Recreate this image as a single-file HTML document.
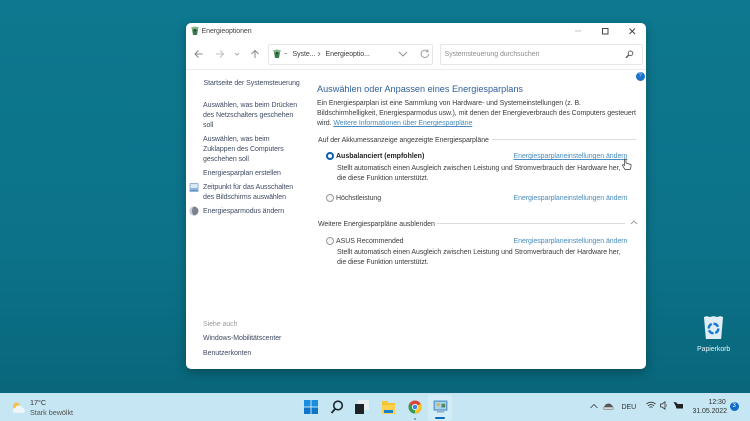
<!DOCTYPE html>
<html lang="de"><head><meta charset="utf-8"><title>Energieoptionen</title>
<style>
html,body{margin:0;padding:0;width:750px;height:421px;overflow:hidden}
body{position:relative;background:linear-gradient(180deg,#0d788f 0%,#0c7289 60%,#086478 100%);font-family:"Liberation Sans",sans-serif;color:#333}
.t{position:absolute;white-space:nowrap;font-size:7px;letter-spacing:-.06px;line-height:10px;color:#3c3c3c;margin-top:1px}
.n{color:#3f4a62}
.l{color:#4a8cbf}
.u{text-decoration:underline}
#win{position:absolute;left:186px;top:23px;width:460px;height:346px;background:#fff;border-radius:5px;box-shadow:0 3px 10px rgba(0,0,0,.3)}
.box{position:absolute;background:#fff;border:1px solid #e6e6e6;border-radius:2px;box-sizing:border-box}
.hr{position:absolute;height:1px;background:#dcdcdc}
.rb{position:absolute;width:8px;height:8px;border-radius:50%;border:1px solid #9a9a9a;background:#f6f6f6;box-sizing:border-box}
svg{position:absolute;overflow:visible}
#bar{position:absolute;left:0;top:393px;width:750px;height:28px;background:#c5e6f2}
</style></head><body>

<div id="win"></div>

<!-- title bar -->
<svg style="left:190px;top:26px" width="10" height="10" viewBox="0 0 10 10"><path d="M2 3h6l-1 6H3z" fill="#3b7d4a"/><path d="M1 1.500L5 .5l4 1-1 2H2z" fill="#7fb58a"/><path d="M4 3l2 0-1 4z" fill="#23402b"/></svg>
<div class="t" style="left:201.500px;top:25px;color:#444;margin-top:1px;top:26px">Energieoptionen</div>
<svg style="left:600px;top:27px" width="40" height="10" viewBox="0 0 40 10" fill="none"><path d="M-25 4h6" stroke="#c4c4c4" stroke-width="1"/><rect x="2.500" y="1.500" width="5.500" height="5.500" stroke="#444" stroke-width="1"/><path d="M29.500 1.500l5.500 5.500M35 1.500l-5.500 5.500" stroke="#444" stroke-width="1"/></svg>

<!-- nav bar -->
<svg style="left:194px;top:49px" width="70" height="10" viewBox="0 0 70 10" fill="none" stroke-width="1"><path d="M8.500 5H1M4.500 1.500L1 5l3.500 3.500" stroke="#8a8a8a"/><path d="M22 5h7.500M26 1.500L29.500 5 26 8.500" stroke="#c0c0c0"/><path d="M41 4l2 2 2-2" stroke="#b0b0b0"/><path d="M61 9V1.500M57.500 5L61 1.500 64.500 5" stroke="#8a8a8a"/></svg>
<div class="box" style="left:267.500px;top:44px;width:165.500px;height:21px"></div>
<svg style="left:272px;top:49px" width="10" height="10" viewBox="0 0 10 10"><path d="M2 3h6l-1 6H3z" fill="#3b7d4a"/><path d="M1 1.500L5 .5l4 1-1 2H2z" fill="#7fb58a"/><path d="M4 3l2 0-1 4z" fill="#23402b"/></svg>
<svg style="left:284px;top:52px" width="4" height="4"><path d="M.5 1.500h2.500" stroke="#888" stroke-width=".8"/></svg>
<div class="t" style="left:292.500px;top:49px">Syste...</div>
<svg style="left:317px;top:51px" width="5" height="6" fill="none"><path d="M1 1l2 2-2 2" stroke="#777" stroke-width=".8"/></svg>
<div class="t" style="left:325.500px;top:49px">Energieoptio...</div>
<svg style="left:398px;top:51px" width="10" height="6" fill="none"><path d="M1 1l4 4 4-4" stroke="#888" stroke-width=".9"/></svg>
<svg style="left:420px;top:49px" width="10" height="10" viewBox="0 0 10 10" fill="none"><path d="M8.500 5A3.700 3.700 0 1 1 7.500 2.300M8 .5v2.300H5.700" stroke="#9a9a9a" stroke-width=".9"/></svg>
<div class="box" style="left:440px;top:44px;width:203px;height:21px"></div>
<div class="t" style="left:444.500px;top:49px;color:#8d8d8d">Systemsteuerung durchsuchen</div>
<svg style="left:625px;top:50px" width="9" height="9" viewBox="0 0 9 9" fill="none"><circle cx="5.500" cy="3.300" r="2.300" stroke="#666" stroke-width="1"/><path d="M3.800 5L1 7.800" stroke="#555" stroke-width="1.400"/></svg>
<div class="hr" style="left:186px;top:69px;width:460px;background:#ececec"></div>

<!-- help -->
<div style="position:absolute;left:635.500px;top:71.500px;width:9px;height:9px;border-radius:50%;background:#1a73c8"></div>
<div class="t" style="left:638.500px;top:70.500px;color:#cfe3f5;font-size:6px;line-height:9px">?</div>

<!-- left pane -->
<div class="t n" style="left:203.500px;top:78px">Startseite der Systemsteuerung</div>
<div class="t n" style="left:203px;top:99.500px">Auswählen, was beim Drücken</div>
<div class="t n" style="left:203px;top:109.500px">des Netzschalters geschehen</div>
<div class="t n" style="left:203px;top:119.500px">soll</div>
<div class="t n" style="left:203px;top:133.500px">Auswählen, was beim</div>
<div class="t n" style="left:203px;top:143.500px">Zuklappen des Computers</div>
<div class="t n" style="left:203px;top:153.500px">geschehen soll</div>
<div class="t n" style="left:203px;top:167.700px">Energiesparplan erstellen</div>
<svg style="left:189px;top:182px" width="10" height="10" viewBox="0 0 10 10"><rect x=".5" y="1" width="9" height="7.500" rx="1" fill="#8fb4d8"/><rect x="1.500" y="2" width="7" height="4" fill="#dbe9f5"/><path d="M.5 8.500h9v1h-9z" fill="#2f6fb0"/></svg>
<div class="t n" style="left:203px;top:182px">Zeitpunkt für das Ausschalten</div>
<div class="t n" style="left:203px;top:191.700px">des Bildschirms auswählen</div>
<svg style="left:189px;top:206px" width="10" height="10" viewBox="0 0 10 10"><circle cx="5" cy="5" r="4.500" fill="#7c8290"/><path d="M5 .5a4.500 4.500 0 0 0 0 9 6 6 0 0 1 0-9z" fill="#c8ced8"/></svg>
<div class="t n" style="left:203px;top:206.300px">Energiesparmodus ändern</div>
<div class="t" style="left:203px;top:319px;color:#9a9a9a">Siehe auch</div>
<div class="t n" style="left:203px;top:333px">Windows-Mobilitätscenter</div>
<div class="t n" style="left:203px;top:348px">Benutzerkonten</div>

<!-- right pane -->
<div class="t" style="left:317px;top:81.500px;font-size:9.150px;letter-spacing:0;line-height:12px;color:#2f5f9a">Auswählen oder Anpassen eines Energiesparplans</div>
<div class="t" style="left:317px;top:98.300px">Ein Energiesparplan ist eine Sammlung von Hardware- und Systemeinstellungen (z. B.</div>
<div class="t" style="left:317px;top:108.300px">Bildschirmhelligkeit, Energiesparmodus usw.), mit denen der Energieverbrauch des Computers gesteuert</div>
<div class="t" style="left:317px;top:118px">wird. <span class="l u">Weitere Informationen über Energiesparpläne</span></div>

<div class="t" style="left:318px;top:135.300px">Auf der Akkumessanzeige angezeigte Energiesparpläne</div>
<div class="hr" style="left:492px;top:139px;width:144px"></div>

<div style="position:absolute;left:326px;top:152px;width:8px;height:8px;border-radius:50%;border:2.500px solid #0a5fb4;background:#fff;box-sizing:border-box"></div>
<div class="t" style="left:336px;top:151px;font-weight:bold;letter-spacing:0;color:#222">Ausbalanciert (empfohlen)</div>
<div class="t l u" style="left:513.500px;top:151px">Energiesparplaneinstellungen ändern</div>
<div class="t" style="left:337px;top:163px">Stellt automatisch einen Ausgleich zwischen Leistung und Stromverbrauch der Hardware her,</div>
<div class="t" style="left:337px;top:172.700px">die diese Funktion unterstützt.</div>
<svg style="left:622px;top:158px" width="10" height="13" viewBox="0 0 10 13"><path d="M2.500 1v6.500L1 6.500.5 7.500 3 11.500h5l1-2.500V6.500L5.500 5.500 4 5V1z" fill="#fff" stroke="#333" stroke-width=".7"/></svg>

<div class="rb" style="left:326px;top:194px"></div>
<div class="t" style="left:336px;top:193px">Höchstleistung</div>
<div class="t l" style="left:513.500px;top:193px">Energiesparplaneinstellungen ändern</div>

<div class="t" style="left:318px;top:218.700px">Weitere Energiesparpläne ausblenden</div>
<div class="hr" style="left:437px;top:223px;width:188px"></div>
<svg style="left:630px;top:220px" width="8" height="5" fill="none"><path d="M1 4l3-3 3 3" stroke="#999" stroke-width=".9"/></svg>

<div class="rb" style="left:326px;top:237px"></div>
<div class="t" style="left:336px;top:235.700px">ASUS Recommended</div>
<div class="t l" style="left:513.500px;top:235.700px">Energiesparplaneinstellungen ändern</div>
<div class="t" style="left:337px;top:247.300px">Stellt automatisch einen Ausgleich zwischen Leistung und Stromverbrauch der Hardware her,</div>
<div class="t" style="left:337px;top:257px">die diese Funktion unterstützt.</div>

<!-- recycle bin -->
<svg style="left:703px;top:315px" width="21" height="26" viewBox="0 0 22 27"><path d="M1 2l3-1 3 1 4-1 4 1 3-1 3 1-2 23H3z" fill="#dfeef4"/><circle cx="11" cy="14" r="5" fill="none" stroke="#1a78d0" stroke-width="2.600" stroke-dasharray="6 1.800"/></svg>
<div class="t" style="left:697px;top:343.500px;color:#e8f2f5">Papierkorb</div>

<!-- taskbar -->
<div id="bar"></div>
<svg style="left:11px;top:401px" width="15" height="13" viewBox="0 0 15 13"><circle cx="5.500" cy="5" r="3.500" fill="#f2c14e"/><path d="M4 12a2.500 2.500 0 0 1 .3-5 3.500 3.500 0 0 1 6.500-.5 2.800 2.800 0 0 1 1 5.500z" fill="#eef4f7"/></svg>
<div class="t" style="left:30px;top:397px;color:#333;font-size:7.300px">17°C</div>
<div class="t" style="left:30px;top:406.500px;color:#555;font-size:7.300px">Stark bewölkt</div>

<svg style="left:304px;top:400px" width="14" height="14" viewBox="0 0 14 14"><rect width="6.500" height="6.500" fill="#1b8de0"/><rect x="7.500" width="6.500" height="6.500" fill="#1b8de0"/><rect y="7.500" width="6.500" height="6.500" fill="#0e74c8"/><rect x="7.500" y="7.500" width="6.500" height="6.500" fill="#0e74c8"/></svg>
<svg style="left:330px;top:400px" width="14" height="14" viewBox="0 0 14 14" fill="none"><circle cx="8" cy="5.500" r="4.300" stroke="#1a2a30" stroke-width="1.600"/><path d="M5 9l-3.500 4" stroke="#1a2a30" stroke-width="1.800"/></svg>
<svg style="left:355px;top:400px" width="14" height="14" viewBox="0 0 14 14"><rect x="3" y="0" width="11" height="10" fill="#e9eef0"/><rect x="0" y="4" width="9" height="10" fill="#1d2326"/></svg>
<svg style="left:381px;top:400px" width="15" height="14" viewBox="0 0 15 14"><path d="M1 1h5l1.500 2H14v3H1z" fill="#f4c430"/><rect x="1" y="5" width="13" height="9" fill="#fbd24e"/><rect x="3" y="10" width="9" height="3" fill="#1a7fc8"/></svg>
<svg style="left:408px;top:400px" width="14" height="14" viewBox="0 0 14 14"><circle cx="7" cy="7" r="6.500" fill="#dc4437"/><path d="M7 7L1.400 3.800A6.500 6.500 0 0 0 7 13.500z" fill="#2f9e4f"/><path d="M7 7l5.600-3.200A6.500 6.500 0 0 1 7 13.500z" fill="#f7c325"/><circle cx="7" cy="7" r="3.100" fill="#fff"/><circle cx="7" cy="7" r="2.300" fill="#3a84e8"/></svg>
<div style="position:absolute;left:413.500px;top:417.500px;width:2px;height:2px;border-radius:50%;background:#7a8a90"></div>
<div style="position:absolute;left:428px;top:395px;width:24px;height:26px;background:#d3edf6;border-radius:3px"></div>
<svg style="left:432.500px;top:400px" width="15" height="13" viewBox="0 0 16 14"><rect x=".5" y=".5" width="15" height="11" fill="#5e9ccf"/><rect x="2" y="2" width="12" height="8" fill="#a8d3e8"/><rect x="4" y="3.500" width="3" height="3" fill="#e0b040"/><rect x="9" y="4" width="4" height="4" fill="#4f8a5c"/><rect x="4" y="12" width="8" height="1.500" fill="#8aa8bc"/></svg>
<div style="position:absolute;left:435px;top:417px;width:9.500px;height:2px;border-radius:1px;background:#0f6cc0"></div>

<svg style="left:590px;top:403px" width="9" height="6" fill="none"><path d="M.5 5L4 1.500 7.500 5" stroke="#444" stroke-width=".8"/></svg>
<svg style="left:603px;top:402px" width="11" height="8" viewBox="0 0 11 8"><path d="M1 6a4.500 4.500 0 0 1 9 0z" fill="#555"/><rect x="0.500" y="5" width="10" height="2.500" rx="1" fill="#d0d8dc" stroke="#666" stroke-width=".5"/></svg>
<div class="t" style="left:621.500px;top:402px;color:#333">DEU</div>
<svg style="left:646px;top:401px" width="10" height="9" viewBox="0 0 10 9" fill="none" stroke="#333" stroke-width=".9"><path d="M.5 3a6.500 6.500 0 0 1 9 0M2 4.800a4.300 4.300 0 0 1 6 0M3.500 6.500a2 2 0 0 1 3 0"/></svg>
<svg style="left:660px;top:401px" width="10" height="9" viewBox="0 0 10 9" fill="none" stroke="#333" stroke-width=".8"><path d="M.5 3v3h1.700L5 8.200V.8L2.200 3z"/><path d="M6.500 3v3" stroke="#888"/></svg>
<svg style="left:673px;top:401px" width="11" height="9" viewBox="0 0 11 9"><path d="M.5 1l3 .5L4.500 3H10v4.500H3.500L2.500 4.500z" fill="#222"/></svg>
<div class="t" style="left:708.500px;top:397px;color:#333">12:30</div>
<div class="t" style="left:692.500px;top:405.500px;color:#333">31.05.2022</div>
<div style="position:absolute;left:729.500px;top:402px;width:9px;height:9px;border-radius:50%;background:#0f6cc8"></div>
<div class="t" style="left:732.500px;top:401px;color:#fff;font-size:6px;line-height:9px">3</div>
</body></html>
